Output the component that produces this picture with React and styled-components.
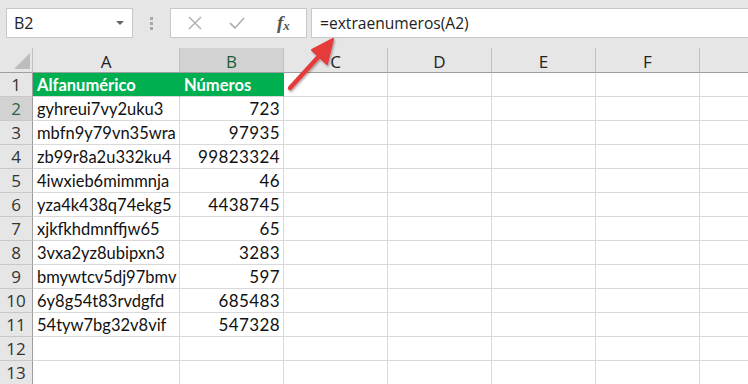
import React from "react";
import styled, { createGlobalStyle } from "styled-components";

const Global = createGlobalStyle`
  html, body { margin: 0; padding: 0; background: #ffffff; overflow: hidden; }
  #root { width: 748px; height: 384px; overflow: hidden; }
`;

const Page = styled.div`
  position: relative;
  width: 748px;
  height: 384px;
  overflow: hidden;
  background: #ffffff;
  font-family: "Open Sans", "Noto Sans", sans-serif;
`;

const Toolbar = styled.div`
  display: flex;
  align-items: flex-start;
  height: 48px;
  box-sizing: border-box;
  padding: 8px 0 0 6px;
  background: #e6e6e6;
`;

const NameBox = styled.div`
  display: flex;
  align-items: center;
  justify-content: space-between;
  flex: none;
  width: 127px;
  height: 30px;
  box-sizing: border-box;
  padding: 0 8px 0 7px;
  background: #fff;
  border: 1px solid #c8c8c8;
  font-size: 16px;
  color: #222;
`;

const Caret = styled.span`
  width: 0;
  height: 0;
  border-left: 4px solid transparent;
  border-right: 4px solid transparent;
  border-top: 4px solid #666;
`;

const Grip = styled.div`
  display: flex;
  flex: none;
  flex-direction: column;
  gap: 2px;
  width: 37px;
  align-items: center;
  padding-top: 9px;
  span {
    width: 3px;
    height: 3px;
    background: #a8a8a8;
  }
`;

const FuncBox = styled.div`
  display: flex;
  flex: none;
  align-items: center;
  width: 137px;
  height: 30px;
  box-sizing: border-box;
  background: #fff;
  border: 1px solid #c8c8c8;
  padding-left: 17px;
  gap: 26px;
`;

const Fx = styled.span`
  font-family: "Liberation Serif", "DejaVu Serif", serif;
  font-style: italic;
  font-weight: bold;
  font-size: 19px;
  color: #555;
  margin-left: 5px;
  sub { font-size: 13px; vertical-align: -1px; }
`;

const FormulaInput = styled.div`
  flex: 1;
  min-width: 0;
  margin-left: 4px;
  height: 30px;
  box-sizing: border-box;
  background: #fff;
  border: 1px solid #c8c8c8;
  border-right: none;
  display: flex;
  align-items: center;
  padding-left: 8px;
  font-size: 15.6px;
  color: #222;
  white-space: nowrap;
`;

const Sheet = styled.div`
  display: grid;
  grid-template-columns: 33px 147px repeat(6, 104px);
  grid-template-rows: 25px repeat(13, 24px);
  background: #fff;
`;

const Corner = styled.div`
  background: #e6e6e6;
  border-right: 1px solid #c0c0c0;
  border-bottom: 1px solid #9e9e9e;
  box-sizing: border-box;
  position: relative;
  &::after {
    content: "";
    position: absolute;
    right: 2px;
    bottom: 3px;
    width: 0;
    height: 0;
    border-left: 16px solid transparent;
    border-bottom: 16px solid #bdbdbd;
  }
`;

const ColHead = styled.div`
  background: ${(p) => (p.$sel ? "#d2d2d2" : "#e6e6e6")};
  color: ${(p) => (p.$sel ? "#1d5a36" : "#222")};
  border-right: 1px solid #c0c0c0;
  border-bottom: 1px solid #9e9e9e;
  box-sizing: border-box;
  display: flex;
  align-items: center;
  justify-content: center;
  font-size: 17px;
  padding-top: 2px;
`;

const RowHead = styled.div`
  background: ${(p) => (p.$sel ? "#d2d2d2" : "#e6e6e6")};
  color: ${(p) => (p.$sel ? "#2f5f43" : "#333")};
  border-right: 1px solid #9e9e9e;
  border-bottom: 1px solid #c8c8c8;
  box-sizing: border-box;
  display: flex;
  align-items: center;
  justify-content: center;
  font-size: 17px;
`;

const Cell = styled.div`
  box-sizing: border-box;
  border-right: 1px solid ${(p) => (p.$head ? "#00b050" : "#d9d9d9")};
  border-bottom: 1px solid #d9d9d9;
  background: ${(p) => (p.$head ? "#00b050" : "#fff")};
  color: ${(p) => (p.$head ? "#fff" : "#111")};
  font-family: Lato, "Liberation Sans", sans-serif;
  font-weight: ${(p) => (p.$head ? 700 : 400)};
  font-size: ${(p) => (p.$num ? "17px" : "16.5px")};
  letter-spacing: ${(p) => (p.$num ? "0.4px" : "0")};
  display: flex;
  align-items: center;
  justify-content: ${(p) => (p.$num ? "flex-end" : "flex-start")};
  padding: 0 3px 0 4px;
  white-space: nowrap;
`;

const Arrow = styled.svg`
  position: absolute;
  left: 280px;
  top: 30px;
  overflow: visible;
`;

const data = [
  ["gyhreui7vy2uku3", "723"],
  ["mbfn9y79vn35wra", "97935"],
  ["zb99r8a2u332ku4", "99823324"],
  ["4iwxieb6mimmnja", "46"],
  ["yza4k438q74ekg5", "4438745"],
  ["xjkfkhdmnffjw65", "65"],
  ["3vxa2yz8ubipxn3", "3283"],
  ["bmywtcv5dj97bmv", "597"],
  ["6y8g54t83rvdgfd", "685483"],
  ["54tyw7bg32v8vif", "547328"],
];

const cols = ["A", "B", "C", "D", "E", "F", ""];

export default function App() {
  const rows = [["Alfanumérico", "Números"], ...data, ["", ""], ["", ""]];
  return (
    <Page>
      <Global />
      <Toolbar>
        <NameBox>
          <span>B2</span>
          <Caret />
        </NameBox>
        <Grip>
          <span />
          <span />
          <span />
        </Grip>
        <FuncBox>
          <svg width="14" height="14" viewBox="0 0 14 14">
            <path d="M1 1 L13 13 M13 1 L1 13" stroke="#b4b4b4" strokeWidth="1.6" fill="none" />
          </svg>
          <svg width="18" height="16" viewBox="0 0 18 16">
            <path d="M2 8 L7 13 L16 3" stroke="#b4b4b4" strokeWidth="1.8" fill="none" />
          </svg>
          <Fx>
            f<sub>x</sub>
          </Fx>
        </FuncBox>
        <FormulaInput>=extraenumeros(A2)</FormulaInput>
      </Toolbar>
      <Sheet>
        <Corner />
        {cols.map((c, i) => (
          <ColHead key={i} $sel={c === "B"}>
            {c}
          </ColHead>
        ))}
        {rows.map((r, i) => (
          <React.Fragment key={i}>
            <RowHead $sel={i === 1}>{i + 1}</RowHead>
            <Cell $head={i === 0}>{r[0]}</Cell>
            <Cell $head={i === 0} $num={i !== 0}>
              {r[1]}
            </Cell>
            {cols.slice(2).map((c, j) => (
              <Cell key={j} />
            ))}
          </React.Fragment>
        ))}
      </Sheet>
      <Arrow width="70" height="70" viewBox="0 0 70 70">
        <defs>
          <filter id="sh" x="-30%" y="-30%" width="160%" height="160%">
            <feDropShadow dx="1" dy="1.5" stdDeviation="1.2" floodColor="#000" floodOpacity="0.35" />
          </filter>
        </defs>
        <g filter="url(#sh)">
          <path d="M10 58 L41 24" stroke="#e63b3b" strokeWidth="4.5" strokeLinecap="round" fill="none" />
          <path d="M53 9 L47 34 L32 20 Z" fill="#e63b3b" stroke="#e63b3b" strokeWidth="2" strokeLinejoin="round" />
        </g>
      </Arrow>
    </Page>
  );
}
